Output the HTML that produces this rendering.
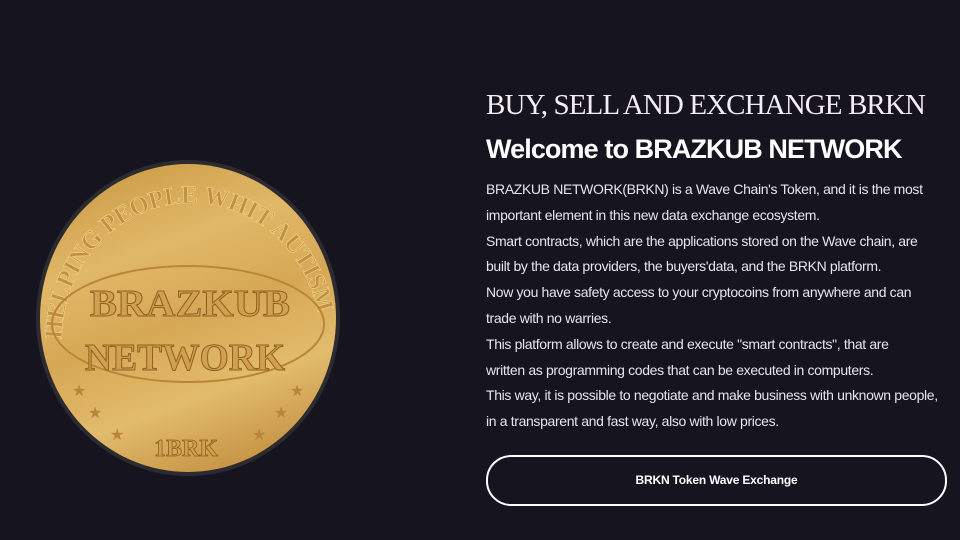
<!DOCTYPE html>
<html><head><style>
body{margin:0;width:960px;height:540px;background:#15141f;overflow:hidden;position:relative;font-family:"Liberation Sans",sans-serif;color:#fff}
.coin{position:absolute;left:36px;top:160px;width:304px;height:316px;border-radius:50%;background:#2b2b30}
.face{position:absolute;left:4px;top:4px;right:4px;bottom:4px;border-radius:50%;background:linear-gradient(160deg,#c8953e 0%,#e0b868 30%,#d6a855 50%,#e2bb6c 70%,#b98232 100%)}
h1{position:absolute;left:486px;top:89px;margin:0;font-family:"Liberation Serif",serif;font-weight:normal;font-size:29px;color:#f4eef4;letter-spacing:-0.9px;white-space:nowrap}
h2{position:absolute;left:486px;top:134px;margin:0;font-size:27px;font-weight:bold;letter-spacing:-0.9px;white-space:nowrap}
p{position:absolute;left:486px;top:177px;margin:0;font-size:14px;line-height:25.8px;color:#e6e6ea;letter-spacing:-0.35px;width:470px}
.btn{position:absolute;left:486px;top:455px;width:457px;height:47px;border:2px solid #fff;border-radius:25px;font-size:12px;font-weight:bold;text-align:center;line-height:47px;letter-spacing:-0.2px}
</style></head><body>
<div class="coin"><div class="face">
<svg width="296" height="308" viewBox="0 0 296 308" style="position:absolute;left:0;top:0">
<defs><path id="arc" d="M22,175 A128,135 0 0 1 280,175"/></defs>
<text font-family="Liberation Serif" font-weight="bold" font-size="25" fill="#c29040" stroke="#f0d08a" stroke-width="0.7" textLength="390" lengthAdjust="spacingAndGlyphs"><textPath href="#arc">HELPING PEOPLE WHIT AUTISM</textPath></text>
<ellipse cx="148" cy="160" rx="136" ry="58" fill="none" stroke="#b98637" stroke-width="2"/>
<text x="150" y="152" text-anchor="middle" font-family="Liberation Serif" font-weight="bold" font-size="38" fill="#d1a050" stroke="#8f6020" stroke-width="1" textLength="200" lengthAdjust="spacingAndGlyphs">BRAZKUB</text>
<text x="145" y="206" text-anchor="middle" font-family="Liberation Serif" font-weight="bold" font-size="38" fill="#d1a050" stroke="#8f6020" stroke-width="1" textLength="200" lengthAdjust="spacingAndGlyphs">NETWORK</text>
<text x="146" y="292" text-anchor="middle" font-family="Liberation Serif" font-weight="bold" font-size="24" fill="#d1a050" stroke="#8f6020" stroke-width="0.8">1BRK</text>
<g font-size="16" fill="#b98637"><text x="32" y="232">★</text><text x="48" y="254">★</text><text x="70" y="276">★</text><text x="250" y="232">★</text><text x="234" y="254">★</text><text x="212" y="276">★</text></g>
</svg></div></div>
<h1>BUY, SELL AND EXCHANGE BRKN</h1>
<h2>Welcome to BRAZKUB NETWORK</h2>
<p>BRAZKUB NETWORK(BRKN) is a Wave Chain's Token, and it is the most<br>important element in this new data exchange ecosystem.<br>Smart contracts, which are the applications stored on the Wave chain, are<br>built by the data providers, the buyers'data, and the BRKN platform.<br>Now you have safety access to your cryptocoins from anywhere and can<br>trade with no warries.<br>This platform allows to create and execute "smart contracts", that are<br>written as programming codes that can be executed in computers.<br>This way, it is possible to negotiate and make business with unknown people,<br>in a transparent and fast way, also with low prices.</p>
<div class="btn">BRKN Token Wave Exchange</div>
</body></html>
